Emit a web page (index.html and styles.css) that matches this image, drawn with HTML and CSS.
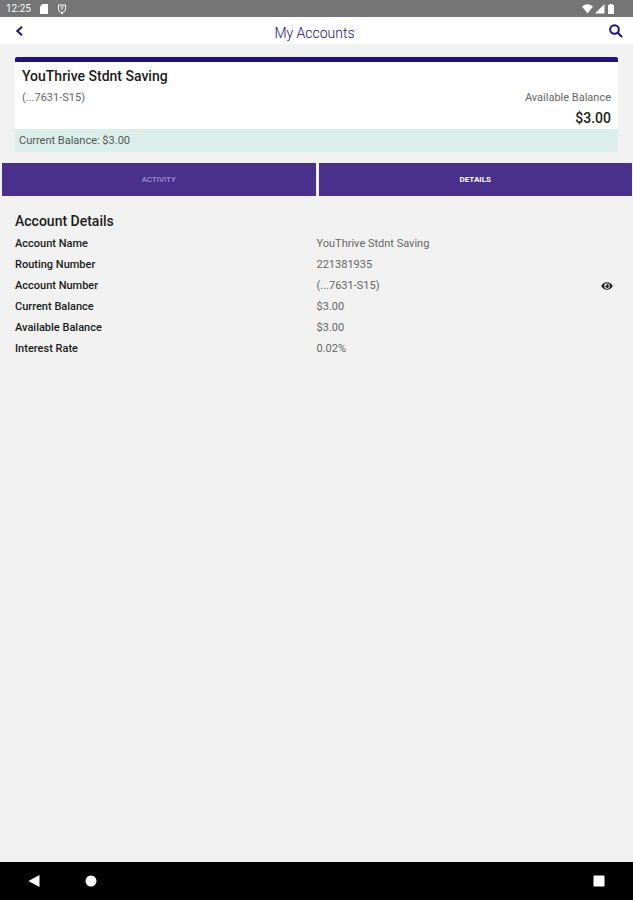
FILE: index.html
```html
<!DOCTYPE html>
<html lang="en">
<head>
    <meta charset="UTF-8">
    <meta name="viewport" content="width=device-width, initial-scale=1.0">
    <title>My Accounts</title>
    <link rel="stylesheet" href="styles.css">
</head>
<body>
    <!-- Device status bar -->
    <div class="status-bar">
        <span>12:25</span>
        <svg class="status-icon" viewBox="0 0 10 10"><path d="M3.500 0H9v10H1V2.500z"/></svg>
        <svg class="status-icon outline" viewBox="0 0 10 10"><path d="M1.500 1h7v4a3.500 3.500 0 0 1-7 0zM4 9.500h2M3.500 3h3M4 5h2"/></svg>
        <div class="status-right">
            <svg width="11" height="10" viewBox="0 0 11 10"><path d="M0 2.500Q5.500-2 11 2.500L5.500 9.500z"/></svg>
            <svg width="10" height="10" viewBox="0 0 10 10"><path d="M9.500 0v9.500H0z"/></svg>
            <svg width="8" height="10" viewBox="0 0 8 10"><path d="M1 1h1.500V0h3v1H7v9H1z"/></svg>
        </div>
    </div>

    <header class="header">
        <button class="icon-btn" aria-label="Back">
            <svg width="8" height="10" viewBox="0 0 8 10"><path class="stroke" d="M7 .8 2.300 5 7 9.200"/></svg>
        </button>
        <h1>My Accounts</h1>
        <button class="icon-btn" aria-label="Search">
            <svg width="14" height="14" viewBox="0 0 14 14"><circle class="stroke" cx="5.500" cy="5.500" r="4.300"/><path class="stroke" d="m8.800 8.800 4.200 4.200"/></svg>
        </button>
    </header>

    <main class="content">
        <section class="card">
            <div class="card-body">
                <h2>YouThrive Stdnt Saving</h2>
                <div class="card-row">
                    <span>(...7631-S15)</span>
                    <span>Available Balance</span>
                </div>
                <div class="card-amount">$3.00</div>
            </div>
            <div class="card-footer">Current Balance: $3.00</div>
        </section>

        <nav class="tabs">
            <button class="tab">ACTIVITY</button>
            <button class="tab active">DETAILS</button>
        </nav>

        <section class="details">
            <h2>Account Details</h2>
            <table>
                <tr><th scope="row">Account Name</th><td>YouThrive Stdnt Saving</td></tr>
                <tr><th scope="row">Routing Number</th><td>221381935</td></tr>
                <tr>
                    <th scope="row">Account Number</th>
                    <td>
                        <div class="masked">
                            <span>(...7631-S15)</span>
                            <button class="eye-btn" aria-label="Show account number">
                                <svg width="12" height="10" viewBox="0 0 576 512"><path d="M572.52 241.4C518.29 135.59 410.93 64 288 64S57.68 135.64 3.48 241.41a32.35 32.35 0 0 0 0 29.19C57.71 376.41 165.07 448 288 448s230.32-71.64 284.52-177.41a32.35 32.35 0 0 0 0-29.19zM288 400a144 144 0 1 1 144-144 143.930 143.930 0 0 1-144 144zm0-240a95.310 95.310 0 0 0-25.310 3.790 47.850 47.850 0 0 1-66.900 66.900A95.780 95.780 0 1 0 288 160z"/></svg>
                            </button>
                        </div>
                    </td>
                </tr>
                <tr><th scope="row">Current Balance</th><td>$3.00</td></tr>
                <tr><th scope="row">Available Balance</th><td>$3.00</td></tr>
                <tr><th scope="row">Interest Rate</th><td>0.02%</td></tr>
            </table>
        </section>
    </main>

    <!-- Device navigation buttons -->
    <div class="nav-bar">
        <button aria-label="Back"><svg width="12" height="12" viewBox="0 0 12 12"><path d="M11.500 0v12L.5 6z"/></svg></button>
        <button aria-label="Home"><svg width="12" height="12" viewBox="0 0 12 12"><circle cx="6" cy="6" r="5.500"/></svg></button>
        <button class="nav-recent" aria-label="Recent apps"><svg width="12" height="12" viewBox="0 0 12 12"><rect x=".5" y=".5" width="11" height="11" rx="1"/></svg></button>
    </div>
</body>
</html>
```
FILE: styles.css
```css
:root {
    --bg-color: #f1f1f1;
    --text-color: #1b1b1b;
    --muted-color: #666666;
    --accent-color: #200f85;
    --tab-color: #49308c;
    --footer-color: #dceee9;
}

* {
    margin: 0;
    padding: 0;
    box-sizing: border-box;
    font-family: Roboto, sans-serif;
}

body {
    display: flex;
    flex-direction: column;
    min-height: 100vh;
    background: var(--bg-color);
    color: var(--text-color);
    font-size: 11px;
    line-height: 21px;
}

button {
    border: none;
    background: none;
    cursor: pointer;
}

svg {
    display: block;
    fill: currentColor;
}

/* Status bar */
.status-bar {
    display: flex;
    align-items: center;
    gap: 8px;
    height: 17px;
    padding: 0 18px 0 6px;
    background: #757575;
    color: #ffffff;
    font-size: 10px;
}

.status-icon {
    width: 10px;
    height: 10px;
}

.outline {
    fill: none;
    stroke: currentColor;
}

.status-right {
    display: flex;
    gap: 2px;
    margin-left: auto;
}

/* Header */
.header {
    display: flex;
    align-items: center;
    justify-content: space-between;
    height: 27px;
    padding: 0 10px 0 12px;
    background: #ffffff;
    color: var(--accent-color);
}

.header h1 {
    padding-top: 5px;
    font-size: 14px;
    font-weight: 300;
}

.icon-btn {
    padding: 4px 0 4px 3px;
    color: var(--accent-color);
}

.stroke {
    fill: none;
    stroke: currentColor;
    stroke-width: 2;
}

.content {
    flex: 1;
    padding-top: 13px;
}

/* Account card */
.card {
    margin: 0 15px;
    border-top: 5px solid var(--accent-color);
    border-radius: 2px;
    background: #ffffff;
}

.card-body {
    padding: 4px 7px 0;
}

.card h2 {
    font-size: 14px;
    font-weight: 500;
}

.card-row {
    display: flex;
    justify-content: space-between;
    color: var(--muted-color);
}

.card-amount {
    font-size: 14px;
    font-weight: 500;
    text-align: right;
}

.card-footer {
    padding: 1px 4px;
    background: var(--footer-color);
    color: #4d5956;
}

/* Tabs */
.tabs {
    display: flex;
    gap: 3px;
    margin: 11px 1px 0 2px;
}

.tab {
    flex: 1;
    height: 33px;
    background: var(--tab-color);
    color: #b5a8da;
    font-size: 8px;
}

.tab.active {
    color: #ffffff;
    font-weight: 700;
}

/* Account details */
.details {
    padding: 15px;
}

.details h2 {
    padding-bottom: 1px;
    font-size: 14px;
    font-weight: 500;
}

table {
    width: 100%;
    border-collapse: collapse;
}

th {
    width: 50%;
    font-weight: 500;
    text-align: left;
}

td {
    color: var(--muted-color);
}

.masked {
    display: flex;
    align-items: center;
    justify-content: space-between;
    padding-right: 5px;
}

.eye-btn {
    color: var(--text-color);
}

/* Navigation bar */
.nav-bar {
    display: flex;
    align-items: center;
    gap: 45px;
    height: 38px;
    padding: 0 28px;
    background: #000000;
}

.nav-bar button {
    color: #ffffff;
}

.nav-recent {
    margin-left: auto;
}
```
